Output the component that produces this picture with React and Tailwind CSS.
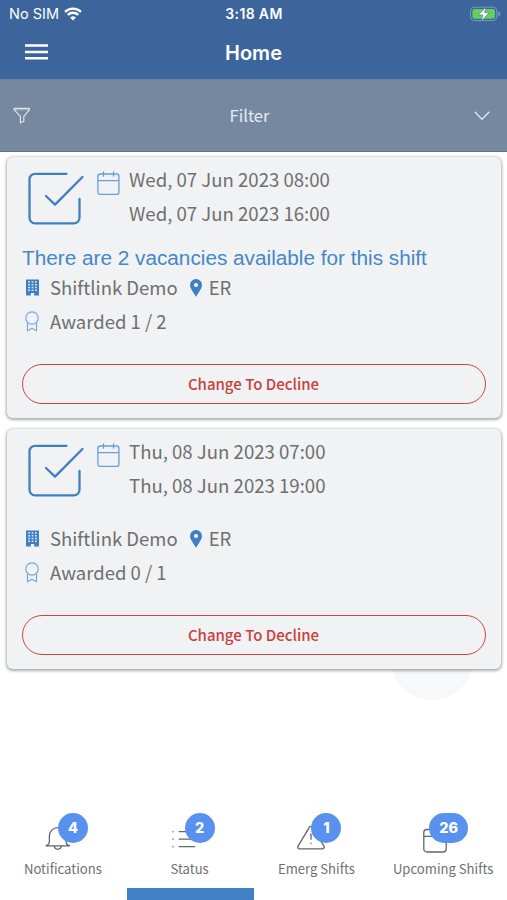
const SHIFTS = [
  {
    id: 1,
    start: 'Wed, 07 Jun 2023 08:00',
    end: 'Wed, 07 Jun 2023 16:00',
    notice: 'There are 2 vacancies available for this shift',
    company: 'Shiftlink Demo',
    unit: 'ER',
    awarded: '1 / 2',
  },
  {
    id: 2,
    start: 'Thu, 08 Jun 2023 07:00',
    end: 'Thu, 08 Jun 2023 19:00',
    company: 'Shiftlink Demo',
    unit: 'ER',
    awarded: '0 / 1',
  },
]

const TABS = [
  { label: 'Notifications', count: 4, icon: BellIcon },
  { label: 'Status', count: 2, icon: ListIcon, active: true },
  { label: 'Emerg Shifts', count: 1, icon: WarningIcon },
  { label: 'Upcoming Shifts', count: 26, icon: TabCalendarIcon },
]

function WifiIcon() {
  return (
    <svg width="18" height="14" viewBox="0 0 18 14" fill="none" stroke="#fff" strokeWidth="2.3">
      <path d="M1 4.9a11.4 11.4 0 0 1 16 0" />
      <path d="M3.8 7.9a7.4 7.4 0 0 1 10.4 0" />
      <path d="M9 13.6 6.2 10.7a4 4 0 0 1 5.6 0z" fill="#fff" stroke="none" />
    </svg>
  )
}

function BatteryIcon() {
  return (
    <svg width="31" height="16" viewBox="0 0 31 16">
      <rect x="0.5" y="1.2" width="26.4" height="13.4" rx="4" fill="none" stroke="#7e9cc2" />
      <rect x="2.4" y="3" width="22.6" height="9.8" rx="2.4" fill="#66cf62" />
      <path d="M28.4 5.6c1.4.4 1.9 1.3 1.9 2.4s-.5 2-1.9 2.4z" fill="#7e9cc2" />
      <path d="M15.8 1 8.4 9h4.3l-1.2 6 7.6-8.2h-4.4z" fill="#fff" stroke="#3f6f8a" strokeWidth="0.6" />
    </svg>
  )
}

function MenuIcon() {
  return (
    <svg width="23" height="16" viewBox="0 0 23 16" stroke="#fff" strokeWidth="2.5">
      <path d="M0 1.500h23M0 7.900h23M0 14.200h23" />
    </svg>
  )
}

function FunnelIcon() {
  return (
    <svg width="18" height="18" viewBox="0 0 18 18" fill="none" stroke="#dfe5ee" strokeWidth="1.2" strokeLinejoin="round">
      <path d="M1.2 1.4h15.2v1.4l-5.6 6.6v4.8l-3.4 1.6V9.4L1.2 2.8z" />
      <path d="M1.2 2.8h15" strokeWidth="0.6" />
    </svg>
  )
}

function ChevronIcon() {
  return (
    <svg width="16" height="10" viewBox="0 0 16 10" fill="none" stroke="#e3e8f0" strokeWidth="1.3" strokeLinecap="round" strokeLinejoin="round">
      <path d="m1.2 1.3 6.8 7 6.8-7" />
    </svg>
  )
}

function CheckBoxIcon() {
  return (
    <svg width="58" height="54" viewBox="0 0 58 54" fill="none" stroke="#3f80c3" strokeWidth="2.3" strokeLinecap="round" strokeLinejoin="round">
      <path d="M38.5 1.8H7a5.5 5.5 0 0 0-5.5 5.5V45.800a5.500 5.500 0 0 0 5.500 5.500H46a5.500 5.500 0 0 0 5.500-5.500V27" />
      <path d="m18 24 9 8.600L54.500 5" />
    </svg>
  )
}

function CalendarIcon() {
  return (
    <svg width="23" height="25" viewBox="0 0 23 25" fill="none" stroke="#6a9ddb" strokeWidth="1.3" strokeLinecap="round">
      <rect x="0.9" y="3" width="21" height="20.4" rx="2.2" />
      <path d="M0.9 9.6h21M6.5 0.8v4.400M16.500 0.8v4.400" />
    </svg>
  )
}

function BuildingIcon() {
  return (
    <svg width="13" height="17" viewBox="0 0 13 17">
      <path d="M0 0.5h13v16H8.2v-2.500H4.800v2.500H0z" fill="#3f80c3" />
      <path
        d="M2.200 2.200h1.800v1.500h-1.800zM5.600 2.200h1.800v1.500h-1.800zM9 2.200h1.800v1.500h-1.800zM2.200 5h1.800v1.500h-1.800zM5.600 5h1.800v1.500h-1.800zM9 5h1.800v1.500h-1.800zM2.200 7.800h1.800v1.500h-1.800zM5.600 7.800h1.800v1.500h-1.800zM9 7.800h1.800v1.500h-1.800zM2.200 10.600h1.800v1.500h-1.800zM5.600 10.600h1.800v1.500h-1.800zM9 10.600h1.800v1.500h-1.800z"
        fill="#dbe6f2"
      />
    </svg>
  )
}

function PinIcon() {
  return (
    <svg width="12" height="18" viewBox="0 0 12 18">
      <path d="M6 0a6 6 0 0 1 6 6c0 3.6-3.6 7.4-6 12C3.600 13.400 0 9.600 0 6a6 6 0 0 1 6-6z" fill="#3f80c3" />
      <circle cx="6" cy="6" r="2.1" fill="#f0f2f4" />
    </svg>
  )
}

function RibbonIcon() {
  return (
    <svg width="14" height="21" viewBox="0 0 14 21" fill="none" stroke="#78a6df" strokeWidth="1.2" strokeLinejoin="round">
      <circle cx="7" cy="7" r="6.2" />
      <path d="M2.500 11.800v8L7 17.200l4.500 2.600v-8" />
    </svg>
  )
}

function BellIcon() {
  return (
    <svg width="26" height="26" viewBox="0 0 26 26" fill="none" stroke="#666" strokeWidth="1.3" strokeLinecap="round">
      <path d="M1 19.800c2.400-.8 3.400-2.200 3.400-4.800v-5a8.300 8.300 0 0 1 16.600 0v5c0 2.600 1.200 4 3.600 4.800z" strokeLinejoin="round" />
      <path d="M9.200 20.200a3.700 4 0 0 0 7.200 0" />
    </svg>
  )
}

function ListIcon() {
  return (
    <svg width="26" height="26" viewBox="0 0 26 26" stroke="#666" strokeWidth="1.3" strokeLinecap="round" className="-ml-[1px]">
      <path d="M8.200 5.600h15.500M8.200 13.100h15.500M8.200 20.600h15.500" />
      <path d="M2 5.200v.8M2 12.700v.8M2 20.200v.8" strokeWidth="1.100" />
    </svg>
  )
}

function WarningIcon() {
  return (
    <svg width="28" height="26" viewBox="0 0 28 26" fill="none" stroke="#666" strokeWidth="1.3" strokeLinecap="round" strokeLinejoin="round" className="-ml-[2px]">
      <path d="M12.300 1.300 1.200 19.800c-1 1.600-.2 3 1.600 3h22.400c1.800 0 2.600-1.400 1.600-3L15.700 1.300c-.9-1.500-2.500-1.500-3.400 0z" />
      <path d="M14 8.200v5" />
      <path d="M14 17.200v.2" />
    </svg>
  )
}

function TabCalendarIcon() {
  return (
    <svg width="24" height="28" viewBox="0 0 24 28" fill="none" stroke="#666" strokeWidth="1.300" strokeLinecap="round" className="-mb-[2px] -ml-[3px]">
      <rect x="0.800" y="3.500" width="22.400" height="22.500" rx="3" />
      <path d="M0.800 10.400h22.400" />
    </svg>
  )
}

function StatusBar() {
  return (
    <div className="grid h-7 grid-cols-3 items-center pr-[6px] pl-[9px] text-[14.5px] leading-none">
      <div className="flex items-center gap-[5px]">
        <span>No SIM</span>
        <WifiIcon />
      </div>
      <span className="pr-[2px] text-center text-[14px] font-semibold tracking-[0.35px]">3:18 AM</span>
      <div className="flex justify-end pb-[1px]">
        <BatteryIcon />
      </div>
    </div>
  )
}

function NavBar() {
  return (
    <div className="grid h-[51px] grid-cols-[24px_1fr_24px] items-center px-[25px] pb-[3px]">
      <button aria-label="Menu">
        <MenuIcon />
      </button>
      <h1 className="pt-[1px] text-center text-[20px] leading-none font-semibold">Home</h1>
    </div>
  )
}

function ShiftCard({ shift }) {
  return (
    <article className="rounded-md bg-[#f0f2f4] px-[15px] pt-[5px] pb-[14px] text-[18.5px] leading-[34px] text-[#6f6f6f] shadow-[0_1px_3px_1px_rgba(0,0,0,0.32)]">
      <div className="flex">
        <div className="w-[75px] pt-[10px] pl-[6px]">
          <CheckBoxIcon />
        </div>
        <div className="w-[32px] pt-[9px]">
          <CalendarIcon />
        </div>
        <div className="text-[18.6px] whitespace-nowrap">
          <p>{shift.start}</p>
          <p>{shift.end}</p>
        </div>
      </div>

      {shift.notice ? (
        <p className="mt-[14px] h-[26px] font-['Liberation_Sans'] text-[20.75px] leading-[28px] whitespace-nowrap text-[#4587c8]">
          {shift.notice}
        </p>
      ) : (
        <div className="h-[19px]" />
      )}

      <div className="flex items-center whitespace-nowrap">
        <span className="w-[28px] pl-[4px]"><BuildingIcon /></span>
        <span>{shift.company}</span>
        <span className="mr-[7px] ml-[12px] pt-[1px]"><PinIcon /></span>
        <span>{shift.unit}</span>
      </div>
      <div className="flex items-center">
        <span className="w-[28px] pl-[3px]"><RibbonIcon /></span>
        <span>Awarded {shift.awarded}</span>
      </div>

      <button className="mt-[26px] flex h-[40px] w-full items-center justify-center rounded-full border-[1.500px] border-[#cc4640] pr-[1px] text-[15px] font-medium text-[#c9403b]">
        Change To Decline
      </button>
    </article>
  )
}

function Tab({ tab }) {
  const Icon = tab.icon
  return (
    <button className="flex h-full flex-1 flex-col items-center text-[#707070]">
      <span className="relative mt-[14px] flex h-[40px] w-[64px] items-end justify-start pb-[1px] pl-[14px]">
        <Icon />
        <span className="absolute top-0 right-[7.500px] flex h-[30px] min-w-[30px] items-center justify-center rounded-full bg-[#5892ee] px-[10px] font-[Inter] text-[14.5px] font-extrabold text-white">
          {tab.count}
        </span>
      </span>
      <span className="mt-[6px] -ml-[1px] text-[13.1px] leading-[20px] whitespace-nowrap">{tab.label}</span>
      <span className={tab.active ? 'mt-auto h-[12px] w-full bg-[#4080c4]' : 'mt-auto h-[12px] w-full'} />
    </button>
  )
}

export default function App() {
  return (
    <div className="relative flex h-[900px] w-[507px] flex-col overflow-hidden bg-white font-['Noto_Sans_CJK_SC',sans-serif]">
      <header className="h-[79px] shrink-0 bg-[#3c659c] font-[Inter] text-white">
        <StatusBar />
        <NavBar />
      </header>

      <div className="flex h-[73px] shrink-0 items-center justify-between border-t border-b border-t-[#6b82a5] border-b-[#5f7290] bg-[#76889f] pr-[17px] pl-[13px] text-[16.500px] text-[#e6ebf3]">
        <FunnelIcon />
        <span className="mr-[6px]">Filter</span>
        <ChevronIcon />
      </div>

      <main className="relative flex-1 pt-[5px] pr-[6px] pl-[7px]">
        <div className="absolute top-[466px] left-[391px] size-[82px] rounded-full bg-[#f7f8fa]" />
        <div className="relative flex flex-col gap-[11px]">
          {SHIFTS.map(shift => <ShiftCard key={shift.id} shift={shift} />)}
        </div>
      </main>

      <nav className="grid h-[101px] shrink-0 grid-cols-4">
        {TABS.map(tab => <Tab key={tab.label} tab={tab} />)}
      </nav>
    </div>
  )
}
